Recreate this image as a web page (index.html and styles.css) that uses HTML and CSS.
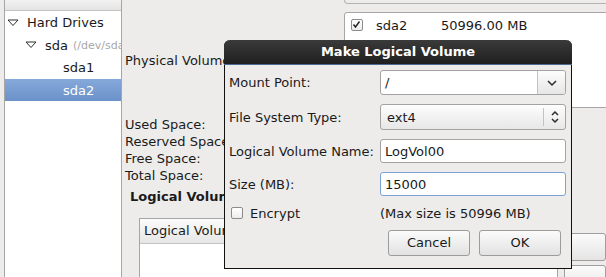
FILE: index.html
```html
<!DOCTYPE html>
<html lang="en">
  <head>
    <meta charset="UTF-8" />
    <title>Make Logical Volume</title>
    <link rel="stylesheet" href="styles.css">
  </head>
  <body>
    <div class="screen">
      <div class="tree">
        <div class="tree-head"></div>
        <div class="node lvl0">
          <svg class="expander" width="12" height="8" viewBox="0 0 12 8"><polygon points="1,1 11,1 6,6.5" /></svg>
          <span>Hard Drives</span>
        </div>
        <div class="node lvl1">
          <svg class="expander" width="12" height="8" viewBox="0 0 12 8"><polygon points="1,1 11,1 6,6.5" /></svg>
          <span>sda</span> <span class="dev">(/dev/sda)</span>
        </div>
        <div class="node lvl2"><span>sda1</span></div>
        <div class="node lvl2 selected"><span>sda2</span></div>
      </div>

      <div class="detail">
        <div class="prev-frame"></div>
        <div class="pv-row">
          <span class="pv-label">Physical Volumes:</span>
          <div class="pv-list">
            <div class="pv-item">
              <span class="check on">
                <svg width="9" height="9" viewBox="0 0 9 9"><path d="M1.5 4.5 L3.5 7 L7.5 1.5" /></svg>
              </span>
              <span class="pv-name">sda2</span>
              <span class="pv-size">50996.00 MB</span>
            </div>
          </div>
        </div>
        <div class="space-info">
          <div>Used Space:</div>
          <div>Reserved Space:</div>
          <div>Free Space:</div>
          <div>Total Space:</div>
        </div>
        <div class="lv-title">Logical Volumes</div>
        <div class="lv-row">
          <div class="lv-table">
            <div class="lv-head">Logical Volume Name</div>
          </div>
          <div class="lv-buttons">
            <div class="side-btn"></div>
            <div class="side-btn"></div>
          </div>
        </div>
      </div>

      <div class="dialog">
        <div class="dialog-title">Make Logical Volume</div>
        <div class="dialog-body">
          <div class="form">
            <label>Mount Point:</label>
            <div class="combo-entry">
              <span class="combo-text">/</span>
              <span class="combo-btn">
                <svg width="12" height="8" viewBox="0 0 12 8"><path d="M2 2 L6 6 L10 2" /></svg>
              </span>
            </div>

            <label>File System Type:</label>
            <div class="combo">
              <span class="combo-text">ext4</span>
              <span class="combo-arrows">
                <svg width="8" height="14" viewBox="0 0 8 14"><path d="M1 5 L4 2 L7 5 M1 9 L4 12 L7 9" /></svg>
              </span>
            </div>

            <label>Logical Volume Name:</label>
            <input class="entry" type="text" value="LogVol00">

            <label>Size (MB):</label>
            <input class="entry focus" type="text" value="15000">

            <label class="encrypt"><span class="check"></span>Encrypt</label>
            <span class="hint">(Max size is 50996 MB)</span>
          </div>
          <div class="actions">
            <div class="btn">Cancel</div>
            <div class="btn">OK</div>
          </div>
        </div>
      </div>
    </div>
  </body>
</html>
```

FILE: styles.css
```css
body {
  margin: 0;
  font-family: "DejaVu Sans", sans-serif;
  font-size: 13px;
  color: #1a1a1a;
  background-color: #edeceb;
}
.screen {
  position: relative;
  width: 606px;
  height: 277px;
  overflow: hidden;
  display: flex;
  padding-left: 4px;
  box-sizing: border-box;
}

/* left tree */
.tree {
  width: 118px;
  flex: none;
  overflow: hidden;
  background-color: #fff;
  border-left: 1px solid #a6a6a6;
  border-right: 1px solid #a6a6a6;
  box-sizing: border-box;
}
.tree-head {
  height: 10px;
  background: linear-gradient(#f2f2f2, #e3e3e3);
  border-bottom: 1px solid #c4c4c4;
}
.node {
  display: flex;
  align-items: center;
  height: 22px;
  white-space: nowrap;
  overflow: hidden;
}
.node > * {
  flex: none;
}
.node.lvl0 {
  height: 23px;
  padding-left: 2px;
}
.node.lvl1 {
  padding-left: 20px;
}
.node.lvl2 {
  height: 23px;
  padding-left: 58px;
}
.node.selected {
  height: 22px;
  background: linear-gradient(#86a9da, #6a91c9);
  color: #fff;
}
.expander {
  margin-right: 8px;
}
.expander polygon {
  fill: none;
  stroke: #2e2e2e;
  stroke-width: 1;
}
.node .dev {
  font-size: 11px;
  color: #a8a8a8;
  margin-left: 5px;
}

/* right content behind the dialog */
.detail {
  flex: none;
  width: 484px;
  padding-left: 3px;
  box-sizing: border-box;
}
.prev-frame {
  height: 3px;
  margin-left: 219px;
  width: 300px;
  border-left: 1px solid #b3b3b3;
  border-bottom: 1px solid #b3b3b3;
  border-bottom-left-radius: 4px;
}
.pv-row {
  display: flex;
  align-items: center;
  margin-top: 8px;
}
.pv-label {
  flex: none;
  width: 219px;
  white-space: nowrap;
}
.pv-list {
  flex: none;
  width: 300px;
  height: 96px;
  background-color: #fff;
  border: 1px solid #a6a6a6;
  border-top-left-radius: 3px;
  box-sizing: border-box;
}
.pv-item {
  display: flex;
  align-items: center;
  height: 22px;
  margin-top: 1px;
  padding-left: 6px;
}
.check {
  display: inline-block;
  width: 10px;
  height: 10px;
  border: 1px solid #8c8c8c;
  border-radius: 2px;
  background: linear-gradient(#fff, #ececec);
}
.check svg {
  display: block;
}
.check path {
  fill: none;
  stroke: #222;
  stroke-width: 1.4;
}
.pv-name {
  margin-left: 13px;
  width: 65px;
}
.space-info {
  margin-top: 8px;
  line-height: 17px;
}
.lv-title {
  margin-top: 4px;
  padding-left: 5px;
  font-weight: bold;
  line-height: 17px;
}
.lv-row {
  display: flex;
  margin-top: 13px;
  padding-left: 14px;
}
.lv-table {
  width: 458px;
  height: 80px;
  background-color: #fff;
  border: 1px solid #a6a6a6;
  box-sizing: border-box;
}
.lv-head {
  height: 24px;
  line-height: 24px;
  padding-left: 4px;
  background: linear-gradient(#fbfbfb, #e6e6e6);
  border-bottom: 1px solid #c4c4c4;
}
.lv-buttons {
  margin-left: 6px;
  padding-top: 15px;
  display: flex;
  flex-direction: column;
  gap: 4px;
}
.side-btn {
  width: 40px;
  height: 26px;
  border: 1px solid #9e9e9e;
  border-radius: 3px;
  background: linear-gradient(#fbfbfb, #e4e4e4);
}

/* dialog */
.dialog {
  position: absolute;
  left: 224px;
  top: 40px;
  width: 348px;
  height: 229px;
  box-sizing: border-box;
  border: 1px solid #111;
  border-top: none;
  border-radius: 6px 6px 0 0;
  background-color: #edeceb;
}
.dialog-title {
  height: 24px;
  margin: 0 -1px;
  line-height: 24px;
  text-align: center;
  font-weight: bold;
  color: #fff;
  background: linear-gradient(#3a3a3a, #1f1f1f);
  border-radius: 6px 6px 0 0;
  border-bottom: 1px solid #4d6a93;
}
.dialog-body {
  padding: 5px 4px 0 4px;
}
.form {
  display: grid;
  grid-template-columns: 151px 186px;
  grid-template-rows: 25px 26px 24px 24px 16px;
  row-gap: 9px;
  align-items: center;
}
.form > label {
  white-space: nowrap;
}
.combo-entry,
.combo {
  display: flex;
  height: 100%;
  box-sizing: border-box;
  border: 1px solid #a3a3a3;
  border-radius: 3px;
}
.combo-entry {
  background-color: #fff;
}
.combo {
  background: linear-gradient(#fdfdfd, #e7e7e7);
}
.combo-text {
  flex: 1;
  align-self: center;
  padding-left: 4px;
}
.combo .combo-text {
  padding-left: 6px;
}
.combo-btn {
  width: 27px;
  display: flex;
  align-items: center;
  justify-content: center;
  border-left: 1px solid #c2c2c2;
  border-radius: 0 3px 3px 0;
  background: linear-gradient(#fdfdfd, #e6e6e6);
}
.combo-arrows {
  width: 21px;
  margin: 3px 0;
  display: flex;
  align-items: center;
  justify-content: center;
  border-left: 1px solid #c2c2c2;
}
.combo-btn path,
.combo-arrows path {
  fill: none;
  stroke: #2b2b2b;
  stroke-width: 1.5;
}
.entry {
  height: 24px;
  box-sizing: border-box;
  margin: 0;
  padding: 0 4px;
  font: inherit;
  color: inherit;
  background-color: #fff;
  border: 1px solid #a3a3a3;
  border-radius: 3px;
  outline: none;
}
.entry.focus {
  border-color: #7ba3d6;
}
.encrypt {
  display: flex;
  align-items: center;
}
.encrypt .check {
  margin-left: 2px;
  margin-right: 7px;
}
.actions {
  display: flex;
  justify-content: flex-end;
  gap: 9px;
  margin-top: 9px;
  padding-right: 6px;
}
.btn {
  width: 82px;
  height: 26px;
  box-sizing: border-box;
  line-height: 24px;
  text-align: center;
  border: 1px solid #9c9c9c;
  border-radius: 3px;
  background: linear-gradient(#fbfbfb, #e2e2e2);
}
```
